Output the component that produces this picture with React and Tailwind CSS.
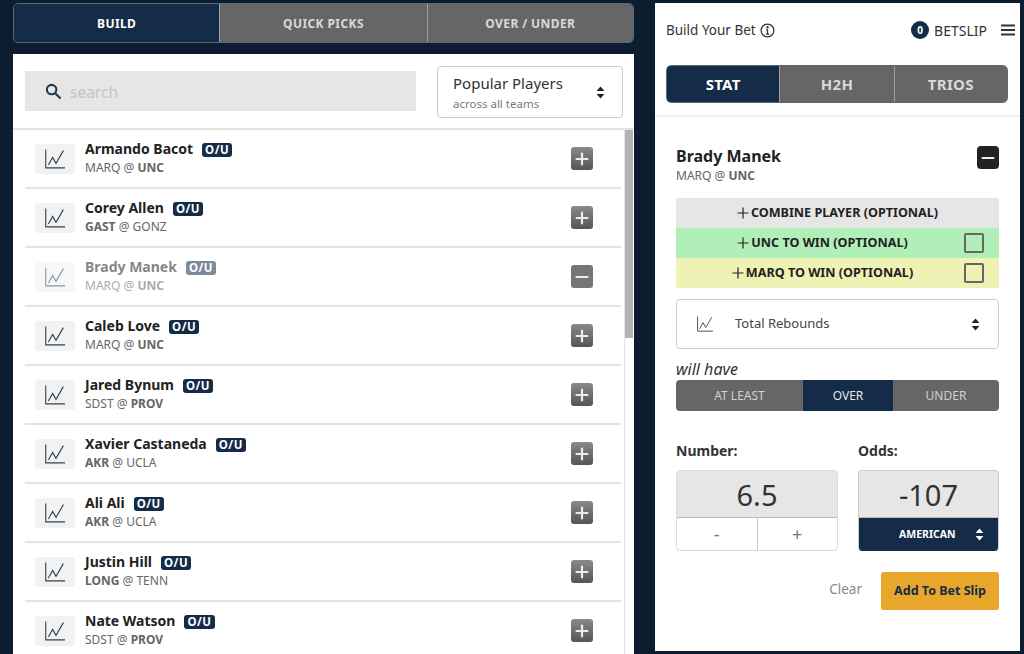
import React from "react";

const FONT = { fontFamily: '"Noto Sans", "Open Sans", sans-serif' };

const players = [
  ["Armando Bacot", "MARQ", "UNC", false, true],
  ["Corey Allen", "GAST", "GONZ", true, false],
  ["Brady Manek", "MARQ", "UNC", false, true],
  ["Caleb Love", "MARQ", "UNC", false, true],
  ["Jared Bynum", "SDST", "PROV", false, true],
  ["Xavier Castaneda", "AKR", "UCLA", true, false],
  ["Ali Ali", "AKR", "UCLA", true, false],
  ["Justin Hill", "LONG", "TENN", true, false],
  ["Nate Watson", "SDST", "PROV", false, true],
];

function ChartIcon({ className }) {
  return (
    <svg viewBox="0 0 22 22" className={className} fill="none" stroke="currentColor" strokeWidth="1.2">
      <path d="M0.8 0.5V20.8H22" />
      <path d="M3.7 17.6L8.4 9.2L12.1 15.8L20.2 1.8" />
    </svg>
  );
}

function Carets({ className }) {
  return (
    <svg viewBox="0 0 10 15" className={className} fill="currentColor">
      <path d="M5 0.5L9.5 5.8H0.5Z" />
      <path d="M5 14.5L9.5 9.2H0.5Z" />
    </svg>
  );
}

function PlusMinus({ minus, className }) {
  return (
    <div className={className}>
      <svg viewBox="0 0 22 22" className="w-[22px] h-[22px]" stroke="#ececec" strokeWidth="2.2" strokeLinecap="round">
        <path d="M5.5 11H16.5" />
        {!minus && <path d="M11 5.5V16.5" />}
      </svg>
    </div>
  );
}

function Row({ name, a, b, boldA, boldB, dim }) {
  return (
    <div className="h-[59px] flex items-center ml-3 mr-[13px] border-b-2 border-[#e4e4e4] shrink-0 relative">
      <div className={`flex items-center flex-1 pl-[10px] ${dim ? "opacity-55" : ""}`}>
        <div className="w-10 h-[30px] rounded-[3px] bg-[#f2f2f2] flex items-center justify-center mr-[10px] text-[#2b4156]">
          <ChartIcon className="w-[20px] h-[20px]" />
        </div>
        <div className="-mt-[3px]">
          <div className="flex items-center h-[21px]">
            <span className="text-[14px] font-bold text-[#222222] leading-none">{name}</span>
            <span className="ml-[9px] mt-[2px] h-[14px] px-[3px] rounded-[3px] bg-[#142c47] text-white text-[11.5px] font-bold leading-[14px] tracking-[0.5px]">O/U</span>
          </div>
          <div className="text-[12px] text-[#666666] leading-[16px]">
            <span className={boldA ? "font-bold" : ""}>{a}</span> @ <span className={boldB ? "font-bold" : ""}>{b}</span>
          </div>
        </div>
      </div>
      <PlusMinus
        minus={dim}
        className={`w-[22px] h-[23px] mr-[28px] rounded-[3px] flex items-center justify-center ${dim ? "bg-[#767676]" : "bg-gradient-to-b from-[#8a8a8a] to-[#555555]"}`}
      />
    </div>
  );
}

function Tabs({ items, className, textClass }) {
  return (
    <div className={`flex rounded-[5px] overflow-hidden border border-[#596a7a] ${className}`}>
      {items.map(([label, w, active], i) => (
        <div
          key={label}
          style={{ width: w }}
          className={`flex items-center justify-center font-bold ${textClass} ${active ? "bg-[#142c47] text-white" : "bg-[#666666] text-[#d9d9d9]"} ${i > 0 ? "border-l border-[#a0a0a0]" : ""}`}
        >
          {label}
        </div>
      ))}
    </div>
  );
}

function OptionRow({ label, bg, check }) {
  return (
    <div className={`h-[30px] flex items-center justify-center relative pt-[1px] ${bg} ${check ? "pr-[30px]" : ""}`}>
      <span className="text-[#222222] text-[12.6px] font-bold flex items-center">
        <svg viewBox="0 0 12 12" className="w-[12px] h-[12px] mr-[2px]" stroke="#222222" strokeWidth="1.2"><path d="M0.5 6H11.5M6 0.5V11.5" /></svg>
        {label}
      </span>
      {check && <span className="absolute right-[15px] top-[5px] w-5 h-5 rounded-[2px] border-2 border-[#666666]" />}
    </div>
  );
}

export default function App() {
  return (
    <div style={FONT} className="w-[1024px] h-[654px] overflow-hidden bg-[#0b1d2e] flex pl-[13px] pt-[3px]">
      <div className="w-[621px] h-[651px] flex flex-col shrink-0">
        <Tabs
          className="h-[40px] shrink-0"
          textClass="text-[12px] tracking-[0.4px] pt-[2px]"
          items={[["BUILD", 206, true], ["QUICK PICKS", 208, false], ["OVER / UNDER", 207, false]]}
        />
        <div className="mt-[11px] flex-1 bg-white flex flex-col min-h-0 relative">
          <div className="h-[76px] shrink-0 flex pl-3 pr-[11px] pt-3 border-b-2 border-[#e4e4e4] justify-between items-start">
            <div className="w-[391px] h-10 mt-[5px] bg-[#e6e6e6] flex items-center pl-5">
              <svg viewBox="0 0 18 18" className="w-[17px] h-[17px]" fill="none" stroke="#1d3a55" strokeWidth="2.2">
                <circle cx="7" cy="7" r="5" />
                <path d="M10.8 10.8L16.5 16.5" />
              </svg>
              <span className="ml-2 pt-[3px] text-[15.5px] text-[#c4c4c4]">search</span>
            </div>
            <div className="w-[186px] h-[52px] border border-[#cccccc] rounded-[4px] flex items-center pl-[15px] pr-[17px] justify-between">
              <div>
                <div className="text-[15px] text-[#333333] leading-[22px] mb-[1px]">Popular Players</div>
                <div className="text-[11.5px] text-[#777777] leading-[17px]">across all teams</div>
              </div>
              <Carets className="w-[9px] h-[13px] text-[#222222]" />
            </div>
          </div>
          <div className="flex-1 min-h-0 overflow-hidden flex flex-col">
            {players.map(([name, a, b, boldA, boldB], i) => (
              <Row key={name} name={name} a={a} b={b} boldA={boldA} boldB={boldB} dim={i === 2} />
            ))}
          </div>
          <div className="absolute right-[1px] top-[76px] bottom-0 w-[9px] border-l border-[#e4e4e4]">
            <div className="h-[208px] bg-[#b4b4b4]" />
          </div>
        </div>
      </div>

      <div className="ml-[21px] w-[365px] h-[648px] shrink-0 bg-white flex flex-col">
        <div className="h-[54px] flex items-center pl-[11px] pr-[5px] shrink-0">
          <span className="text-[13.5px] text-[#333333]">Build Your Bet</span>
          <svg viewBox="0 0 16 16" className="w-[15px] h-[15px] ml-[4px]" fill="none" stroke="#333333" strokeWidth="1.4">
            <circle cx="8" cy="8" r="6.8" />
            <path d="M8 7V11.8M6.4 11.8H9.8M6.6 7H8" />
            <circle cx="8" cy="4.6" r="0.6" fill="#333333" />
          </svg>
          <span className="ml-auto w-[18px] h-[18px] rounded-full bg-[#142c47] text-white text-[10px] font-bold flex items-center justify-center">0</span>
          <span className="ml-[5px] text-[14px] text-[#333333]">BETSLIP</span>
          <svg viewBox="0 0 14 12" className="w-[14px] h-[12px] ml-[14px]" fill="#333333">
            <rect y="0.5" width="14" height="2" />
            <rect y="5" width="14" height="2" />
            <rect y="9.5" width="14" height="2" />
          </svg>
        </div>
        <div className="px-[11px] pt-2 pb-3 border-b-2 border-[#f0f0f0] shrink-0">
          <Tabs
            className="h-[38px] w-[342px]"
            textClass="text-[15px] tracking-[0.3px]"
            items={[["STAT", 113, true], ["H2H", 115, false], ["TRIOS", 114, false]]}
          />
        </div>
        <div className="px-[21px] flex-1 flex flex-col">
          <div className="flex justify-between items-start pt-[28px] h-[81px] shrink-0">
            <div>
              <div className="text-[16px] font-bold text-[#222222] leading-[22px]">Brady Manek</div>
              <div className="text-[12px] text-[#666666] leading-[17px]">MARQ @ <span className="font-bold">UNC</span></div>
            </div>
            <PlusMinus minus className="w-[22px] h-[23px] mt-[1px] rounded-[4px] bg-[#222222] flex items-center justify-center" />
          </div>
          <OptionRow label="COMBINE PLAYER (OPTIONAL)" bg="bg-[#e6e6e6]" />
          <OptionRow label="UNC TO WIN (OPTIONAL)" bg="bg-[#b0f0b8]" check />
          <OptionRow label="MARQ TO WIN (OPTIONAL)" bg="bg-[#eef2b4]" check />
          <div className="mt-[11px] h-[50px] shrink-0 border border-[#cccccc] rounded-[4px] flex items-center pl-5 pr-[18px] text-[#2b4156]">
            <ChartIcon className="w-[16px] h-[16px]" />
            <span className="ml-[22px] text-[13px] text-[#444444]">Total Rebounds</span>
            <Carets className="ml-auto w-[9px] h-[13px] text-[#222222]" />
          </div>
          <div className="mt-[10px] h-[21px] text-[16px] italic text-[#333333] leading-[21px]">will have</div>
          <div className="flex h-[31px] rounded-[4px] overflow-hidden text-[12px] shrink-0">
            <div className="w-[127px] bg-[#666666] text-[#d0d0d0] flex items-center justify-center">AT LEAST</div>
            <div className="w-[90px] bg-[#142c47] text-[#e6e6e6] flex items-center justify-center">OVER</div>
            <div className="flex-1 bg-[#666666] text-[#d0d0d0] flex items-center justify-center">UNDER</div>
          </div>
          <div className="flex mt-[30px] gap-5">
            <div className="w-[162px]">
              <div className="text-[14px] font-bold text-[#333333] leading-[20px]">Number:</div>
              <div className="mt-[9px] h-[81px] border border-[#dcdcdc] rounded-[4px] overflow-hidden flex flex-col">
                <div className="h-[47px] pt-[1px] bg-[#e6e6e6] border-b border-[#bbbbbb] text-[29px] text-[#333333] flex items-center justify-center">6.5</div>
                <div className="flex-1 flex text-[#777777] text-[18px]">
                  <div className="flex-1 flex items-center justify-center border-r border-[#cccccc]">-</div>
                  <div className="flex-1 flex items-center justify-center">+</div>
                </div>
              </div>
            </div>
            <div className="w-[141px]">
              <div className="text-[14px] font-bold text-[#333333] leading-[20px]">Odds:</div>
              <div className="mt-[9px] h-[81px] rounded-[4px] overflow-hidden flex flex-col border border-[#cccccc] border-b-0">
                <div className="h-[47px] pt-[1px] bg-[#e6e6e6] border-b border-[#bbbbbb] text-[29px] text-[#333333] flex items-center justify-center">-107</div>
                <div className="flex-1 bg-[#142c47] text-white text-[10.5px] font-bold flex items-center pl-10 pr-[14px] justify-between">
                  <span>AMERICAN</span>
                  <Carets className="w-[9px] h-[13px] text-white" />
                </div>
              </div>
            </div>
          </div>
          <div className="flex items-center justify-end mt-[21px]">
            <span className="text-[13.5px] text-[#888888] mr-[19px] -mt-[3px]">Clear</span>
            <div className="w-[118px] h-[38px] rounded-[3px] bg-[#e8a62a] text-[#142c47] text-[12.5px] font-bold flex items-center justify-center">Add To Bet Slip</div>
          </div>
        </div>
      </div>
    </div>
  );
}
